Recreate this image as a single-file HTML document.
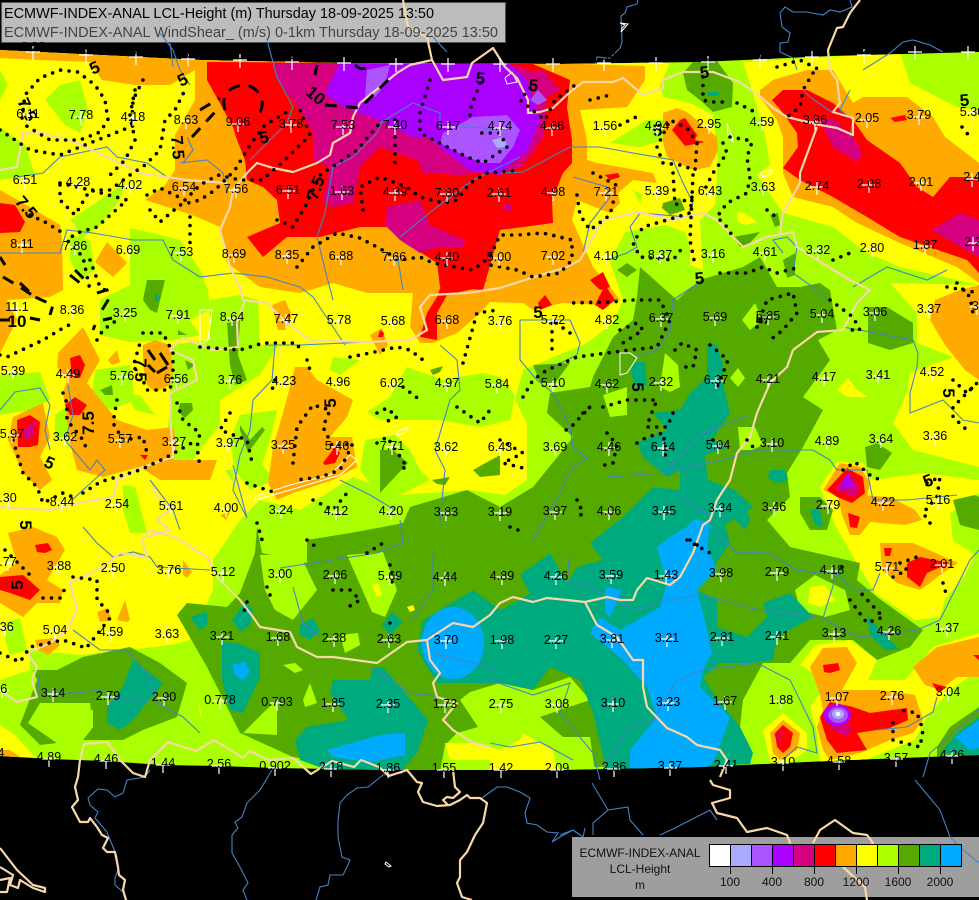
<!DOCTYPE html>
<html><head><meta charset="utf-8"><title>ECMWF-INDEX-ANAL</title>
<style>html,body{margin:0;padding:0;background:#000;overflow:hidden}svg{display:block}text{font-family:"Liberation Sans",sans-serif}</style></head>
<body>
<svg xmlns="http://www.w3.org/2000/svg" width="979" height="900" viewBox="0 0 979 900">
<defs><clipPath id="c"><path d="M0,50 200,60 340,63 560,64 700,62 830,56 979,52 V755 L850,760 700,767 557,770 388,770 331,769 275,768 219,766 162,765 106,761 49,759 0,756Z"/></clipPath></defs>
<rect width="979" height="900" fill="#000"/>
<rect x="1.5" y="2.5" width="504" height="40" fill="#bcbcbc" stroke="#555"/>
<rect x="572" y="837" width="407" height="60" fill="#9e9e9e"/>
<g clip-path="url(#c)">
<rect width="979" height="900" fill="#aaff00"/>
<g fill="#ffff00">
<path d="M0,50 670,63 660,85 663,97 690,103 713,115 718,160 715,205 700,220 703,270 690,265 690,245 685,232 665,225 625,232 610,262 623,300 613,323 587,343 523,370 515,400 527,423 527,480 505,495 470,490 400,495 353,477 300,510 260,500 240,520 213,560 213,590 190,640 170,645 130,650 80,655 30,650 30,670 0,680Z"/>
<path d="M743,62 900,53 910,83 957,107 979,110 979,285 900,267 867,253 833,227 783,213 757,175 770,165 765,135 755,100Z"/>
<path d="M890,283 979,285 979,467 913,450 893,423 907,393 910,373 953,357 917,343 917,313Z"/>
<path d="M820,487 837,462 863,463 873,480 923,473 979,480 979,493 950,513 953,540 975,555 965,575 945,600 940,617 915,620 875,593 855,560 835,525 825,500Z"/>
<path d="M0,725 15,735 35,757 0,757Z"/>
</g>
<g fill="#aaff00">
<path d="M45,100 60,85 80,80 88,110 80,133 65,125Z"/><path d="M0,70 8,85 0,100Z"/><path d="M0,127 25,145 35,175 0,180Z"/>
<path d="M70,220 125,183 120,200 100,225 80,240 75,225Z"/>
<path d="M130,228 160,235 180,240 200,270 208,290 210,310 190,320 200,335 175,340 130,342 100,335 100,300 130,285Z"/>
<path d="M70,235 90,240 95,270 80,280 70,260Z"/>
<path d="M170,345 210,340 210,300 240,295 258,300 260,345 278,345 260,375 220,400 220,425 200,450 190,465 172,460 168,425 170,400Z"/>
<path d="M240,415 277,410 270,440 262,465 275,480 250,490 235,470 230,440Z"/>
<path d="M0,375 40,372 50,400 30,410 0,415Z"/><path d="M95,370 130,365 135,400 110,410 92,395Z"/><path d="M127,395 140,395 155,415 135,410Z"/><path d="M55,415 75,400 72,440 55,440Z"/>
<path d="M610,143 647,120 667,120 663,140 640,147Z"/><path d="M633,190 643,195 640,203Z"/>
<path d="M123,485 135,487 147,533 130,533 123,510Z"/><path d="M97,450 110,450 113,462 100,462Z"/><path d="M225,470 233,470 233,482Z"/><path d="M333,357 360,360 340,375 330,370Z"/>
<path d="M367,412 390,397 407,367 443,380 483,373 500,377 515,395 510,420 480,427 440,420 415,420 380,420Z"/>
<path d="M365,440 395,435 410,450 420,470 430,480 400,495 375,490 360,470Z"/>
<path d="M7,622 20,618 27,650 10,655 5,640Z"/>
</g>
<g fill="#55aa00">
<path d="M640,267 677,300 700,280 743,267 760,257 777,287 800,287 820,283 830,290 837,330 818,340 830,360 803,397 823,410 803,447 787,473 790,497 767,520 790,547 860,563 857,580 877,597 923,630 910,647 877,660 853,640 810,640 790,663 763,663 743,700 740,727 753,762 440,772 387,772 293,757 240,733 207,667 177,615 187,603 227,607 240,593 255,553 257,527 262,553 307,563 307,540 350,533 383,527 403,523 410,507 467,490 500,507 533,487 563,450 573,437 547,413 550,393 590,387 593,377 613,337 633,320 637,297Z"/>
<path d="M37,680 33,670 57,670 83,657 130,647 160,663 187,683 177,717 143,730 123,740 83,740 93,727 93,710 43,707 28,723 57,743 40,745 20,725Z"/>
<path d="M868,307 887,307 913,323 913,343 890,350 868,343Z"/><path d="M865,447 877,443 892,453 880,470 867,467Z"/><path d="M800,497 820,497 833,510 827,530 810,530 800,513Z"/><path d="M953,500 975,495 979,497 979,530 960,525Z"/>
<path d="M683,73 693,62 717,61 733,83 732,107 713,112 700,100 687,90Z"/><path d="M663,203 680,198 685,210 670,215 662,208Z"/><path d="M727,227 733,237 760,232 750,243 740,247Z"/><path d="M770,215 778,213 780,225 775,227Z"/><path d="M783,260 795,253 795,275 787,278Z"/><path d="M617,270 627,263 637,270 627,277Z"/>
<path d="M227,323 240,320 238,355 247,380 235,385 230,365Z"/><path d="M180,403 192,403 193,410 185,418 178,412Z"/><path d="M100,390 112,385 113,395 105,395Z"/><path d="M178,330 187,335 178,335Z"/><path d="M185,360 195,365 188,370Z"/><path d="M240,425 250,440 262,427 265,430 250,450 247,450 240,430Z"/><path d="M380,450 393,450 408,463 380,493Z"/><path d="M473,470 500,455 500,475 480,477Z"/><path d="M432,480 450,477 445,485 437,484Z"/><path d="M430,370 443,366 440,372 433,375Z"/><path d="M147,280 165,280 157,313 150,310 143,300Z"/><path d="M533,365 570,363 555,383 540,383Z"/>
<path d="M703,663 743,667 743,680 723,690 703,687Z"/>
<path d="M937,747 950,727 979,707 979,757 937,757Z"/>
</g>
<g fill="#aaff00">
<path d="M738,427 755,427 763,445 752,450 740,450Z"/><path d="M742,320 755,303 762,320 750,330Z"/><path d="M730,378 738,368 745,378 738,387Z"/><path d="M660,387 665,353 678,365 680,387 670,392Z"/><path d="M603,395 627,387 627,415 610,417Z"/>
<path d="M347,555 383,552 397,590 385,617 372,612Z"/><path d="M340,635 358,633 360,645 345,653Z"/><path d="M283,665 295,663 303,670 295,673Z"/><path d="M303,700 310,683 317,703 305,707Z"/><path d="M243,733 263,713 277,700 277,735Z"/><path d="M40,703 90,703 93,727 83,740 57,743 28,723Z"/>
<path d="M260,555 300,555 317,590 293,620 275,610 265,590Z"/>
<path d="M440,772 445,745 457,733 478,727 460,700 470,692 500,683 533,690 570,677 590,700 560,710 540,717 563,737 590,737 595,772Z"/>
<path d="M795,590 815,575 845,590 850,610 825,617 800,610Z"/>
<path d="M753,700 767,690 790,693 803,713 817,737 810,760 750,762Z"/>
<path d="M800,665 815,645 850,640 877,660 868,680 905,680 933,647 979,633 979,700 950,690 925,740 860,762 820,762 808,710Z"/>
</g>
<g fill="#ffff00">
<path d="M490,755 520,740 523,733 553,750 557,772 490,772Z"/><path d="M737,212 745,213 757,222 745,225 737,222Z"/><path d="M837,390 848,378 857,390 868,397 847,397Z"/><path d="M372,585 378,583 382,595 377,597Z"/><path d="M407,607 413,605 415,610 410,612Z"/><path d="M198,700 200,715 202,716Z"/><path d="M810,587 825,585 835,600 820,607 808,603Z"/>
<path d="M763,730 783,713 807,733 807,750 790,762 770,762Z"/>
<path d="M800,665 815,645 850,640 877,660 868,680 905,680 933,647 979,633 979,670 950,690 925,720 915,740 860,762 820,762 817,733 810,707 827,683 820,677Z"/>
<path d="M445,743 480,743 500,750 490,760 450,760Z"/>
</g>
<g fill="#00aa7f">
<path d="M717,345 723,365 722,380 730,413 712,440 730,447 705,455 708,480 735,490 753,507 725,525 730,543 697,590 717,600 717,627 747,637 767,617 763,603 790,593 813,617 777,637 773,660 750,663 720,663 703,677 713,693 740,727 753,753 750,764 607,772 593,713 580,680 550,667 533,690 500,683 467,683 437,683 417,650 423,620 473,590 500,610 520,600 530,593 520,575 550,553 567,583 577,567 603,560 590,543 623,517 653,487 680,490 680,470 667,477 643,457 637,443 667,430 653,413 680,410 690,393 707,377 707,343Z"/>
<path d="M333,680 370,680 373,667 383,667 428,720 417,753 400,772 333,772 300,760 295,740 307,727 348,720 330,693Z"/>
<path d="M222,642 238,643 260,653 260,677 243,713 230,710 222,680Z"/><path d="M133,660 163,683 133,720 120,730 107,723 107,707 123,687Z"/>
<path d="M190,617 207,612 207,625 200,630Z"/><path d="M232,620 245,602 253,610 250,625 240,632Z"/><path d="M300,625 313,618 320,630 310,640 300,635Z"/><path d="M382,625 392,612 403,622 390,635Z"/>
<path d="M867,615 880,630 900,650 885,650 870,635Z"/><path d="M770,470 785,470 788,480 778,483 768,478Z"/><path d="M633,362 645,362 647,385 637,388 631,375Z"/><path d="M810,510 820,510 823,527 815,525Z"/><path d="M707,92 720,92 718,96 708,96Z"/>
<path d="M155,292 160,298 155,302Z"/><path d="M940,753 957,733 979,717 979,755Z"/>
<path d="M735,520 745,505 750,520 745,530Z"/>
</g>
<g fill="#00aaff">
<path d="M693,520 710,522 707,547 717,570 697,590 703,613 712,653 703,670 700,687 730,717 717,753 707,772 630,772 630,750 657,717 647,687 623,660 590,633 600,617 620,630 660,607 667,583 657,547 670,537 687,527Z"/>
<ellipse cx="453" cy="643" rx="31" ry="36"/>
<path d="M327,750 380,735 405,733 405,755 370,762 335,757Z"/><path d="M232,665 245,662 250,672 243,680 235,675Z"/><path d="M605,587 622,590 610,617 605,612Z"/><path d="M955,737 979,720 979,748 970,750Z"/>
</g>
<g fill="#ffaa00">
<path d="M0,50 580,64 645,66 645,80 627,107 580,110 587,140 587,160 597,163 653,173 657,183 633,180 618,193 620,203 610,213 577,200 572,220 593,267 610,287 620,300 600,305 563,303 533,310 523,303 490,302 480,313 457,333 433,343 420,343 410,327 413,293 367,293 333,283 300,293 260,287 227,263 220,227 197,217 177,210 145,200 165,185 175,170 175,135 195,100 195,70 170,85 135,85 102,80 90,62 40,60 0,58Z"/>
<path d="M663,113 677,108 687,112 717,137 718,150 710,167 693,170 667,157 663,143Z"/>
<path d="M760,90 773,80 807,70 833,70 853,103 863,97 907,97 933,117 945,137 979,163 979,283 957,267 933,257 900,243 857,223 833,207 793,197 783,173 783,137 777,120 760,97Z"/>
<path d="M0,190 30,207 60,225 62,240 63,290 50,297 7,300 17,320 0,353Z"/>
<path d="M95,262 107,242 127,263 113,277Z"/>
<path d="M58,353 83,327 100,360 87,383 117,420 147,430 173,427 177,447 173,460 217,460 210,480 160,480 140,467 103,477 77,470 70,443 63,393 67,380 57,367Z"/>
<path d="M13,417 43,403 50,437 40,457 52,480 40,490 23,473 8,440Z"/>
<path d="M143,345 155,340 170,345 173,370 170,385 155,392 147,385 143,365Z"/>
<path d="M295,367 307,367 317,380 353,400 347,417 330,437 352,437 357,467 333,480 293,493 277,500 268,483 273,447 283,413 290,387Z"/>
<path d="M272,305 285,300 292,315 285,330 278,330Z"/><path d="M370,335 382,328 388,345 380,355 375,345Z"/><path d="M108,360 117,350 120,362 112,365Z"/>
<path d="M8,533 33,527 57,537 65,550 47,580 63,590 60,603 37,603 23,617 0,603 0,575 17,563Z"/>
<path d="M35,640 55,638 60,645 48,655 38,650Z"/>
<path d="M97,612 108,608 112,620 100,622Z"/><path d="M117,620 125,600 130,620 127,622Z"/><path d="M183,560 192,572 187,578 183,575Z"/><path d="M0,750 10,750 20,757 0,757Z"/><path d="M220,515 230,512 226,520Z"/>
<path d="M838,497 860,495 890,497 915,510 922,520 905,525 870,522 860,535 850,535 842,515Z"/>
<path d="M823,490 840,463 860,467 870,483 867,497 845,500Z"/>
<path d="M880,543 913,543 958,563 940,575 930,583 920,590 897,583 882,570Z"/>
<path d="M810,667 823,648 847,647 857,663 842,690 880,690 915,695 923,720 913,733 890,740 860,753 830,760 823,750 817,727 823,710 820,695Z"/>
<path d="M913,667 937,647 979,637 979,677 957,677 940,690 925,685Z"/>
<path d="M770,733 783,720 800,733 797,750 780,760 773,753Z"/>
<path d="M960,290 979,285 979,380 965,370 945,345 930,320 935,300Z"/>
</g>
<g fill="#ff0000">
<path d="M207,62 533,64 570,80 567,107 572,140 572,163 563,173 552,200 553,223 500,230 483,290 440,287 437,263 417,250 393,227 360,227 320,237 287,237 263,257 247,237 280,223 277,200 263,187 247,180 245,160 237,140 233,127 207,80Z"/>
<path d="M443,280 487,280 477,288 447,295 437,313 437,340 420,337 427,313 437,297Z"/>
<path d="M772,100 783,90 807,90 833,103 853,120 867,140 900,163 917,187 933,197 950,177 979,177 979,273 967,260 900,237 867,217 833,197 800,180 783,168 798,147 797,133 783,113Z"/>
<path d="M890,118 905,115 907,120 895,122Z"/>
<path d="M0,203 15,205 25,222 20,232 0,233Z"/>
<path d="M70,358 80,355 85,365 80,378 72,377Z"/><path d="M65,405 75,397 87,405 80,415 70,415Z"/><path d="M140,455 148,455 145,460Z"/>
<path d="M17,420 30,415 40,422 38,445 30,447 18,447Z"/>
<path d="M323,463 335,447 340,453 335,463 325,465Z"/>
<path d="M0,577 23,575 40,590 30,600 10,593 0,590Z"/><path d="M35,545 48,543 52,550 45,553 37,552Z"/>
<path d="M680,120 685,118 697,135 695,140 705,142 685,146 672,130Z"/><path d="M605,175 618,173 620,177 610,180Z"/>
<path d="M590,280 603,272 610,287 600,290Z"/><path d="M595,305 605,285 615,300 603,310Z"/>
<path d="M538,303 545,295 552,305 540,310Z"/><path d="M380,330 384,333 383,337 378,337Z"/>
<path d="M848,513 860,517 857,528 850,527Z"/>
<path d="M827,490 847,468 863,477 865,493 852,503 837,497Z"/>
<path d="M907,563 920,557 950,563 927,573 920,587 907,577Z"/><path d="M884,548 892,548 890,556 885,556Z"/>
<path d="M823,665 838,663 840,670 830,673 824,672Z"/>
<path d="M820,717 830,702 853,707 870,713 907,708 908,720 890,728 857,733 867,750 837,753 827,740 823,727Z"/>
<path d="M932,683 947,687 938,693Z"/><path d="M973,655 979,655 979,660Z"/>
<path d="M775,733 783,725 793,733 790,747 783,753 777,747Z"/>
</g>
<g fill="#d4007f">
<path d="M273,63 517,65 533,72 543,70 560,90 547,97 543,137 533,153 520,168 500,172 460,175 423,173 417,160 380,147 360,167 353,203 333,207 323,200 330,167 313,160 313,133 293,100 277,80Z"/>
<path d="M387,207 420,200 430,225 465,240 463,248 440,247 420,253 400,240 385,225Z"/>
<path d="M820,120 833,118 853,137 862,153 858,162 833,147Z"/>
<path d="M932,230 960,213 979,220 979,257 960,247Z"/>
<path d="M503,205 510,203 512,210 503,211Z"/>
<path d="M23,430 35,420 33,437 25,440Z"/>
<path d="M835,490 848,472 860,487 855,497Z"/>
<path d="M837,723 853,727 847,737 830,728Z"/>
<path d="M773,735 784,727 781,748 776,738Z" opacity=".4"/>
</g>
<g fill="#aa00ff">
<path d="M340,63 510,64 527,80 540,120 528,150 513,163 500,175 470,170 443,150 430,138 413,137 380,120 360,113 340,105 325,93Z"/>
<path d="M840,488 848,473 853,488Z"/>
<ellipse cx="837" cy="715" rx="14" ry="11"/>
</g>
<g fill="#aa55ff">
<path d="M367,70 390,65 385,85 375,97 365,97Z"/>
<path d="M440,143 443,133 473,117 507,115 520,130 513,147 500,163 483,163 467,157 447,147Z"/>
<path d="M530,100 538,90 547,100 538,105Z"/>
<ellipse cx="838" cy="715" rx="10" ry="8"/>
</g>
<g fill="#aaaaff">
<path d="M492,140 503,137 508,147 497,148Z"/>
<ellipse cx="838" cy="714" rx="6" ry="5"/>
</g>
<ellipse cx="838" cy="714" rx="2.5" ry="2" fill="#fff"/>
</g>
<!-- rivers -->
<g fill="none" stroke="#4583c4" stroke-width="1.1">
<path d="M170,43 173,67M267,40 277,77 293,107 287,123 277,133 250,160M160,33 173,50 180,70 190,85M433,37 447,52"/>
<path d="M0,253 60,253 67,230 93,233 133,240 163,240 173,260 200,277 233,273 267,277 300,287 313,297 345,345"/>
<path d="M60,157 107,147 117,157 147,163 167,177M60,157 43,173 17,177M180,163 207,160 223,173 227,193M187,137 193,150 183,163"/>
<path d="M383,120 377,133 353,157 333,167 325,213 317,237 327,277 333,300M400,237 433,210 473,180 520,157M397,253 403,290M413,103 440,113 440,127 473,127 507,130M413,103 380,123"/>
<path d="M500,173 523,172 570,147 600,147 633,153 673,160 683,183 693,203 687,217 640,213 630,227 637,247 627,253 607,260M583,253 590,223 610,197 607,187 573,177"/>
<path d="M850,90 840,110 853,120 850,137M833,113 810,97 803,90M863,70 890,53 903,42 913,40 930,45 943,52M853,287 887,267 927,280 947,270M783,253 773,240 787,237 797,247 793,273 817,290 827,300"/>
<path d="M843,327 913,340 918,353 917,367 910,393 910,413 943,400 963,420 979,423M520,320 520,360 537,380 553,393 570,427 573,447 587,458 570,470 560,493 533,540M520,320 570,320 580,343 577,355 553,367M637,357 657,350 670,330 673,300 703,280"/>
<path d="M607,477 663,473 707,463 733,457 757,450 813,450 830,460 837,470 867,470 873,500 907,500 957,495M667,470 703,433 750,415M680,497 717,520"/>
<path d="M265,345 300,345 367,342M275,345 272,380 253,400 250,430 240,455 233,490 247,518M68,385 73,415 65,440 90,470 97,460 105,470 72,500M0,410 15,392 40,388 50,405 45,430 50,450M440,345 457,360 460,390 450,400 435,450 445,470 440,520M340,480 370,495 395,510M150,480 173,510 180,530M233,465 247,518"/>
<path d="M83,527 97,543 113,557 133,552 150,557 157,567 210,570M293,587 303,623 320,637M280,568 377,553 403,543 400,520M433,553 433,590 413,620M73,630 100,650 127,650 147,673 157,703 183,717 200,733M40,673 37,693 77,693 100,690 113,700 150,700M433,653 500,670M370,667 410,693 440,697"/>
<path d="M490,680 533,695 570,683 560,713 593,753 600,780M570,553 567,580 590,587 607,597 637,610 667,600 700,595 723,600 750,608 823,618 857,637 883,635 917,630 940,620 970,560 979,550M823,618 837,573 817,573 797,570 767,552 737,553 713,530M837,573 853,590 873,590 880,573M603,767 630,727 653,720 677,680 703,670 757,663 790,680 813,727 817,753 797,747 783,760M877,730 907,727 933,712 937,697M923,777 930,753 957,730 979,710M490,743 510,747 540,742 573,760"/>
<path d="M150,770 145,777 127,780 123,793 115,797 107,790 98,789 88,798 90,805 98,812 95,818 107,832 113,847 117,857 118,870 115,878 115,885 123,892 127,900"/>
<path d="M272,770 260,790 247,803 242,817 235,822 238,828 232,835 232,853 240,867 248,883 243,890 247,900"/>
<path d="M403,773 383,775 368,787 357,788 347,795 340,803 338,820 338,837 342,857 350,860 347,867 343,875 330,875 328,885 320,887 316,900"/>
<path d="M482,798 497,787 507,787 520,792 530,798 525,813 527,823 537,825 547,832 558,833 552,842 560,837 573,830 580,835"/>
<path d="M592,783 608,810 593,823 593,835M608,810 628,807 630,820 643,835M560,835 573,830 583,837 585,828M660,835 677,827 710,810 717,820M915,780 940,810 950,837 963,850 979,863"/>
<path d="M638,0 637,4 627,7 625,13 621,16 622,42 620,48 610,58 597,57 595,63M850,0 852,7 840,12 830,10 823,15 807,12 793,12 785,7 780,13 782,27 790,33 788,42 780,43 780,52 793,58 797,70"/>
</g>
<!-- lake outlines -->
<g fill="none" stroke="#fff" stroke-width="1">
<path d="M255,500 290,490 340,475 357,460 350,455 330,475 290,485 256,496ZM200,310 212,310 208,340 200,345ZM397,432 408,427 405,433 397,435ZM620,353 630,353 637,358 627,373 620,375ZM727,123 733,140 733,142 728,135ZM760,173 772,170 770,175 763,177ZM505,78 512,72 517,82 507,84ZM386,862 391,866 389,867 385,864ZM620,23 628,24 621,32 622,28 625,25Z"/>
</g>
<!-- borders -->
<g fill="none" stroke="#f8d8a8" stroke-width="2.2" stroke-linejoin="round">
<path d="M403,0 408,27 427,37 432,60 410,65 397,73 360,103 353,117 350,133 333,143 330,155 317,163 293,172 273,168 257,163 247,173 233,190 230,207 220,230 230,267 240,287 243,300 267,303 287,323 310,340 367,342 410,340 427,330 420,307 430,295 467,293 500,288 547,273 567,267 580,260 603,220 637,212 673,220 703,213 717,220 743,247 767,237 793,232 797,247 817,260 850,280 870,290 857,303 843,330 817,332 793,350 787,367 770,383 757,413 750,437 737,453 730,480 717,500 710,520 703,525 693,553 680,577 670,585 647,578 637,590 633,600 620,600 607,597 585,602 567,600 547,598 533,602 513,597 500,603 490,615 473,627 453,623 427,640 407,642 377,663 333,657 317,657 297,647 290,632 260,627 253,617 240,600 217,577 208,558 177,538 150,530 142,540 147,557 120,553 103,567 70,583 77,610 67,630 50,643 27,653 37,667 32,680 37,697 17,702 0,690"/>
<path d="M0,507 50,510 83,502 113,497 117,480 143,467 173,457 170,413 170,393 197,380 193,360 170,350 183,338 213,350 238,347 237,323 245,300"/>
<path d="M153,487 157,497 170,510 157,520 170,530 147,537"/>
<path d="M0,170 17,167 23,133 43,133 77,143 113,160 140,173 187,180 227,183"/>
<path d="M585,602 597,625 617,637 633,660 643,660 643,687 647,707 667,728 687,737 697,745 720,750 727,760 720,777"/>
<path d="M710,780 713,785 730,790 730,798 712,803 717,813 737,818 747,832 767,828 787,835 790,843 793,860M813,843 820,830 835,820 853,833 867,835 873,843 843,867 865,887 867,900"/>
<path d="M84,744 107,742 121,761 133,773 145,777 150,760 168,742 196,751 214,740 243,758 250,751 268,760 293,758 311,774 332,761 354,767 361,760 379,767 389,776 407,770 417,782 422,783 418,792 423,802 437,806 450,805 460,800 467,795 470,798 480,798 487,803 483,823 475,835 467,852 460,860 460,877 457,883 462,897 472,900"/>
<path d="M84,744 80,760 78,777 75,787 78,800 72,807 80,822 88,822 90,818 97,827 102,835 108,838 103,848 107,852 115,852 118,867 119,875 125,880 123,890 126,900"/>
<path d="M453,770 455,787 460,792 453,798 447,797 443,800 448,805"/>
<path d="M427,640 430,660 440,673 433,683 437,697 457,703 443,720 453,730 473,743 490,747"/>
<path d="M0,848 17,870 33,885 45,888 45,892 33,888 20,880 18,888 10,885 13,875 0,867M0,880 10,878 7,892 0,892"/>
<path d="M860,0 850,13 843,27 837,28 828,50 830,70 837,80 840,103 833,112 853,118 853,135 837,128 820,125 787,117 773,108 762,98 740,82 713,72 683,72 663,80 663,88 643,95 623,78 613,82 583,82 570,92 553,108 540,112 528,113 528,100 517,78 505,67 493,48 472,63 467,77 443,80 432,60"/>
<path d="M817,127 800,173 800,183 783,213 780,233"/>
</g>
<!-- dotted contours -->
<g fill="none" stroke="#000" stroke-width="3.6" stroke-linecap="round" stroke-dasharray="0 8.5">
<path d="M22,118 25,95 40,78 60,70 78,72 95,85 105,100 108,120 100,132 80,140 50,140 25,125"/>
<path d="M0,130 30,150 60,155 85,145 110,135 135,125"/>
<path d="M60,185 60,200 75,215 90,190 110,190 130,175 145,165 160,150 165,120 175,110 185,90"/>
<path d="M147,195 160,188 185,200 200,185 218,175 240,180 262,180 285,160 310,135 300,110"/>
<path d="M135,90 130,115 135,140 125,160 110,175M150,210 160,222 180,205 200,200 215,190 235,170 250,145 265,125 290,110"/>
<path d="M363,210 360,187 380,177 407,187 420,197 443,203 457,200 470,183 487,173 520,170"/>
<path d="M277,220 293,227 305,207 320,175 357,150 380,123M395,120 395,165"/>
<path d="M430,80 420,113 420,133 467,157 483,163 507,147 500,133 480,133M480,83 470,110 470,123"/>
<path d="M297,267 313,247 337,233 360,238 377,247 400,260 420,257 433,263 473,270 490,257 500,235 517,235 543,233 572,240 572,260 560,273 533,277 517,270 490,265"/>
<path d="M577,195 580,215 590,230 610,215 615,195M593,173 620,187M657,147 663,163 680,165 695,170 697,143 687,128 670,120 657,147"/>
<path d="M673,173 675,205 692,197 690,213 667,220 643,227 633,243 640,257 673,260 683,247M723,143 727,153 713,173 703,193M730,137 747,140 752,142 747,157 750,177 747,193 727,203 717,217 727,227 733,237M693,175 690,240 695,265"/>
<path d="M777,67 800,60 820,70M813,73 803,90 800,107 783,120M737,103 757,113M703,77 703,100 710,102 730,102M833,260 850,253M767,210 780,220M720,273 747,273 763,267 777,273 800,267"/>
<path d="M757,327 767,300 793,293 797,313 783,330 770,340M675,350 682,343 697,350 693,367 680,367M710,345 728,360 723,373 717,387M830,300 853,317 860,330 847,330"/>
<path d="M523,397 533,380 547,370 577,357 607,353 630,350 657,347 670,320 660,300 633,300 610,302 570,303M620,330 637,323 643,330 623,343M570,333 552,320 552,353M583,413 590,407 570,428 560,433"/>
<path d="M603,407 627,400 657,400 650,417 647,427 667,427 673,413M637,443 647,437 663,433 667,453 663,458M607,433 617,445 613,463 597,467M713,440 723,450M747,440 753,447"/>
<path d="M0,355 7,357 43,340 63,328 73,323M97,340 103,330 117,320M143,333 163,333 173,353 173,373 170,390 147,390 140,373 133,367 140,343"/>
<path d="M117,400 113,423 123,440 143,437 147,453M63,393 67,403 67,420 83,440 87,450M13,440 23,473 37,487 43,503 63,493 73,497M83,493 100,482 113,478 140,470 167,457 197,440M177,403 183,420 200,433 197,447 200,467"/>
<path d="M200,347 240,350 263,343 297,343 300,350M275,380 272,390M230,413 220,430 247,440 253,467M293,463 297,427 313,405 330,410 323,427 333,447 353,443 340,470 320,477 297,480M247,483 267,490 277,493"/>
<path d="M307,360 310,370M350,357 370,353 397,347 410,350 427,363M463,363 477,313 497,310M457,407 480,423 490,410M377,413 387,408 397,417 383,423M403,387 420,400M377,443 387,437 407,467 397,470M313,500 333,510 347,493M500,440 523,453 503,463 523,468"/>
<path d="M257,523 263,543M307,540 320,550M333,590 350,590 360,600 343,610M367,553 380,545 387,540M247,602 242,618M267,587 270,595M390,623 395,625M390,565 392,582"/>
<path d="M73,577 97,580 97,600 107,610 110,618 87,647M43,598 60,598 68,583M0,653 20,662 30,647 63,640 83,647M5,550 17,562 30,575"/>
<path d="M687,540 710,553M690,540 700,547M850,600 867,623 883,617 860,592M893,577 907,570 900,563 917,557M943,583 947,597M893,723 893,740 920,747 923,730 917,713 900,710M842,567 845,567"/>
<path d="M927,483 940,477 937,497 923,513 930,523M953,380 967,393 977,383 953,407 953,417 970,433M947,287 979,293M957,283 970,297 973,313M962,127 970,137M577,500 583,513 577,518M510,527 523,532"/>
<path d="M143,80 133,100 132,123M60,183 90,190 127,200 97,227 77,233 67,240 83,257 90,290M30,215 45,222 63,233M190,217 190,243M90,260 100,287 110,293"/>
<path d="M843,470 855,462 870,475 880,480M530,88 520,100 545,120 555,100 575,85M590,100 610,95M620,125 640,115"/>
</g>
<!-- dashed contours -->
<g fill="none" stroke="#000" stroke-width="3" stroke-dasharray="12 9">
<path d="M200,110 220,98M192,137 215,112M225,110C220,95 230,85 247,85 262,90 268,105 255,120"/>
<path d="M317,65 315,75M325,105 360,108 393,75M355,65C360,70 365,70 370,65"/>
<path d="M20,283 35,297 53,305 50,315M0,320 10,320M30,318 40,320M0,257 5,265M3,277 20,287 35,297"/>
<path d="M97,293 107,290 110,297 102,310M103,320 112,318M95,325 93,330M70,275 80,283M75,270 85,280"/>
<path d="M148,350 155,360M160,353 168,365M148,365 155,372M157,373 167,367" stroke-dasharray="none"/>
</g>
<!-- contour labels -->
<g font-weight="bold" font-size="17" text-anchor="middle" fill="#000">
<text transform="translate(97,73) rotate(-25)">5</text><text transform="translate(185,85) rotate(-25)">5</text><text transform="translate(22,112) rotate(65)">7.5</text><text transform="translate(22,211) rotate(50)">7.5</text><text transform="translate(172,148) rotate(85)">7.5</text><text transform="translate(265,143) rotate(-10)">5</text><text transform="translate(312,100) rotate(40)">10</text><text transform="translate(321,190) rotate(-70)">7.5</text><text transform="translate(480,84) rotate(5)">5</text><text transform="translate(533,91) rotate(5)">5</text><text transform="translate(705,78) rotate(-5)">5</text><text transform="translate(658,136) rotate(-5)">5</text><text transform="translate(965,106) rotate(-5)">5</text><text transform="translate(700,284) rotate(-5)">5</text><text transform="translate(538,318)">5</text><text transform="translate(632,387) rotate(90)">5</text><text transform="translate(768,320) rotate(-85)">5</text><text transform="translate(943,393) rotate(90)">5</text><text transform="translate(930,486) rotate(-20)">5</text><text transform="translate(135,370) rotate(90)">7.5</text><text transform="translate(94,423) rotate(-90)">7.5</text><text transform="translate(47,468) rotate(25)">5</text><text transform="translate(336,403) rotate(-90)">5</text><text transform="translate(20,525) rotate(90)">5</text><text x="17" y="327">10</text><text transform="translate(23,585) rotate(-90)">5</text>
</g>
<!-- crosses -->
<path fill="none" stroke="#fff" stroke-width="1.2" d="M26,52h14M33,46v14M79,55h14M86,49v14M129,57h14M136,51v14M181,59h14M188,53v14M233,60h14M240,54v14M285,62h14M292,56v14M337,63h14M344,57v14M389,64h14M396,58v14M441,64h14M448,58v14M493,64h14M500,58v14M546,64h14M553,58v14M597,63h14M604,57v14M649,63h14M656,57v14M701,62h14M708,56v14M753,60h14M760,54v14M805,57h14M812,51v14M857,55h14M864,49v14M908,52h14M915,46v14M961,52h14M968,46v14
M21,115h14M28,109v14M74,117h14M81,111v14M126,118h14M133,112v14M179,121h14M186,115v14M231,124h14M238,118v14M284,125h14M291,119v14M336,127h14M343,121v14M388,127h14M395,121v14M441,127h14M448,121v14M493,128h14M500,122v14M545,128h14M552,122v14M598,128h14M605,122v14M650,128h14M657,122v14M702,126h14M709,120v14M755,123h14M762,117v14M808,122h14M815,116v14M860,120h14M867,114v14M912,117h14M919,111v14M965,113h14M972,107v14
M18,181h14M25,175v14M71,184h14M78,178v14M123,186h14M130,180v14M177,188h14M184,182v14M229,190h14M236,184v14M281,191h14M288,185v14M335,192h14M342,186v14M388,193h14M395,187v14M440,194h14M447,188v14M492,194h14M499,188v14M546,193h14M553,187v14M599,193h14M606,187v14M650,192h14M657,186v14M703,192h14M710,186v14M756,188h14M763,182v14M810,187h14M817,181v14M862,185h14M869,179v14M914,183h14M921,177v14M965,179h14M972,173v14
M15,245h14M22,239v14M68,247h14M75,241v14M121,251h14M128,245v14M174,253h14M181,247v14M227,255h14M234,249v14M280,256h14M287,250v14M334,257h14M341,251v14M387,258h14M394,252v14M440,258h14M447,252v14M492,258h14M499,252v14M546,257h14M553,251v14M599,257h14M606,251v14M653,256h14M660,250v14M706,255h14M713,249v14M758,253h14M765,247v14M811,251h14M818,245v14M865,249h14M872,243v14M918,246h14M925,240v14M966,243h14M973,237v14
M10,308h14M17,302v14M65,311h14M72,305v14M118,314h14M125,308v14M171,316h14M178,310v14M225,318h14M232,312v14M279,320h14M286,314v14M332,321h14M339,315v14M386,322h14M393,316v14M440,321h14M447,315v14M493,322h14M500,316v14M546,321h14M553,315v14M600,321h14M607,315v14M654,319h14M661,313v14M708,318h14M715,312v14M761,317h14M768,311v14M815,315h14M822,309v14M868,313h14M875,307v14M922,310h14M929,304v14M970,307h14M977,301v14
M6,372h14M13,366v14M61,375h14M68,369v14M115,377h14M122,371v14M169,380h14M176,374v14M223,381h14M230,375v14M277,382h14M284,376v14M331,383h14M338,377v14M385,384h14M392,378v14M440,384h14M447,378v14M490,385h14M497,379v14M546,384h14M553,378v14M600,385h14M607,379v14M654,383h14M661,377v14M709,381h14M716,375v14M761,380h14M768,374v14M817,378h14M824,372v14M871,376h14M878,370v14M925,373h14M932,367v14
M5,435h14M12,429v14M58,438h14M65,432v14M113,440h14M120,434v14M167,443h14M174,437v14M221,444h14M228,438v14M276,446h14M283,440v14M330,447h14M337,441v14M385,447h14M392,441v14M439,448h14M446,442v14M493,448h14M500,442v14M548,448h14M555,442v14M602,448h14M609,442v14M656,448h14M663,442v14M711,446h14M718,440v14M765,444h14M772,438v14M820,442h14M827,436v14M874,440h14M881,434v14M928,437h14M935,431v14
M1,499h14M8,493v14M55,503h14M62,497v14M110,505h14M117,499v14M164,507h14M171,501v14M219,509h14M226,503v14M274,511h14M281,505v14M329,512h14M336,506v14M384,512h14M391,506v14M439,513h14M446,507v14M493,513h14M500,507v14M548,512h14M555,506v14M602,512h14M609,506v14M657,512h14M664,506v14M713,509h14M720,503v14M767,508h14M774,502v14M821,506h14M828,500v14M876,503h14M883,497v14M931,501h14M938,495v14
M1,563h14M8,557v14M52,567h14M59,561v14M106,569h14M113,563v14M162,571h14M169,565v14M216,573h14M223,567v14M273,575h14M280,569v14M328,576h14M335,570v14M383,577h14M390,571v14M438,578h14M445,572v14M495,577h14M502,571v14M549,577h14M556,571v14M604,576h14M611,570v14M659,576h14M666,570v14M714,574h14M721,568v14M770,573h14M777,567v14M825,571h14M832,565v14M880,568h14M887,562v14M935,565h14M942,559v14
M-2,628h14M5,622v14M48,631h14M55,625v14M104,633h14M111,627v14M160,635h14M167,629v14M215,637h14M222,631v14M271,638h14M278,632v14M327,639h14M334,633v14M382,640h14M389,634v14M439,641h14M446,635v14M495,641h14M502,635v14M549,641h14M556,635v14M605,640h14M612,634v14M660,639h14M667,633v14M715,638h14M722,632v14M770,637h14M777,631v14M827,634h14M834,628v14M882,632h14M889,626v14M940,629h14M947,623v14
M-5,690h14M2,684v14M46,694h14M53,688v14M101,697h14M108,691v14M157,698h14M164,692v14M213,701h14M220,695v14M270,703h14M277,697v14M326,704h14M333,698v14M381,705h14M388,699v14M438,705h14M445,699v14M494,705h14M501,699v14M550,705h14M557,699v14M606,704h14M613,698v14M661,703h14M668,697v14M718,702h14M725,696v14M774,701h14M781,695v14M830,698h14M837,692v14M885,697h14M892,691v14M941,693h14M948,687v14
M42,759h14M49,753v14M99,761h14M106,755v14M156,765h14M163,759v14M212,766h14M219,760v14M268,768h14M275,762v14M324,769h14M331,763v14M381,770h14M388,764v14M437,770h14M444,764v14M494,770h14M501,764v14M550,770h14M557,764v14M607,769h14M614,763v14M663,768h14M670,762v14M719,766h14M726,760v14M776,763h14M783,757v14M832,762h14M839,756v14M889,759h14M896,753v14M945,756h14M952,750v14"/>
<!-- value labels -->
<g font-size="12.6" fill="#000" text-anchor="middle" transform="translate(0,-1)">
<text x="33" y="52">6.22</text><text x="86" y="55">6.55</text><text x="136" y="57">2.41</text><text x="188" y="59">5.89</text><text x="240" y="60">9.16</text><text x="292" y="62">5.43</text><text x="604" y="63">1.45</text><text x="656" y="63">3.13</text><text x="708" y="62">5.39</text><text x="760" y="60">3.68</text><text x="864" y="55">3.25</text>
<text x="28" y="119">6.11</text><text x="81" y="120">7.78</text><text x="133" y="122">4.18</text><text x="186" y="125">8.63</text><text x="238" y="127">9.06</text><text x="291" y="129">3.78</text><text x="343" y="130">7.53</text><text x="395" y="130">7.40</text><text x="448" y="131">6.17</text><text x="500" y="131">4.74</text><text x="552" y="131">4.66</text><text x="605" y="131">1.56</text><text x="657" y="131">4.94</text><text x="709" y="129">2.95</text><text x="762" y="127">4.59</text><text x="815" y="125">3.86</text><text x="867" y="123">2.05</text><text x="919" y="120">3.79</text><text x="972" y="117">5.30</text>
<text x="25" y="185">6.51</text><text x="78" y="187">4.28</text><text x="130" y="190">4.02</text><text x="184" y="192">6.54</text><text x="236" y="194">7.56</text><text x="288" y="195">6.51</text><text x="342" y="196">1.63</text><text x="395" y="197">4.39</text><text x="447" y="198">7.80</text><text x="499" y="198">2.61</text><text x="553" y="197">4.98</text><text x="606" y="197">7.21</text><text x="657" y="196">5.39</text><text x="710" y="196">6.43</text><text x="763" y="192">3.63</text><text x="817" y="191">2.74</text><text x="869" y="189">2.08</text><text x="921" y="187">2.01</text><text x="972" y="182">2.4</text>
<text x="22" y="249">8.11</text><text x="75" y="251">7.86</text><text x="128" y="255">6.69</text><text x="181" y="257">7.53</text><text x="234" y="259">8.69</text><text x="287" y="260">8.35</text><text x="341" y="261">6.88</text><text x="394" y="262">7.66</text><text x="447" y="262">4.40</text><text x="499" y="262">5.00</text><text x="553" y="261">7.02</text><text x="606" y="261">4.10</text><text x="660" y="260">8.37</text><text x="713" y="259">3.16</text><text x="765" y="257">4.61</text><text x="818" y="255">3.32</text><text x="872" y="253">2.80</text><text x="925" y="250">1.87</text><text x="973" y="247">2.2</text>
<text x="17" y="312">11.1</text><text x="72" y="315">8.36</text><text x="125" y="318">3.25</text><text x="178" y="320">7.91</text><text x="232" y="322">8.64</text><text x="286" y="324">7.47</text><text x="339" y="325">5.78</text><text x="393" y="326">5.68</text><text x="447" y="325">6.68</text><text x="500" y="326">3.76</text><text x="553" y="325">5.72</text><text x="607" y="325">4.82</text><text x="661" y="323">6.37</text><text x="715" y="322">5.69</text><text x="768" y="321">5.85</text><text x="822" y="319">5.04</text><text x="875" y="317">3.06</text><text x="929" y="314">3.37</text><text x="977" y="311">3.</text>
<text x="13" y="376">5.39</text><text x="68" y="379">4.49</text><text x="122" y="381">5.76</text><text x="176" y="384">6.56</text><text x="230" y="385">3.76</text><text x="284" y="386">4.23</text><text x="338" y="387">4.96</text><text x="392" y="388">6.02</text><text x="447" y="388">4.97</text><text x="497" y="389">5.84</text><text x="553" y="388">5.10</text><text x="607" y="389">4.62</text><text x="661" y="387">2.32</text><text x="716" y="385">6.37</text><text x="768" y="384">4.21</text><text x="824" y="382">4.17</text><text x="878" y="380">3.41</text><text x="932" y="377">4.52</text>
<text x="12" y="439">5.97</text><text x="65" y="442">3.62</text><text x="120" y="444">5.57</text><text x="174" y="447">3.27</text><text x="228" y="448">3.97</text><text x="283" y="450">3.25</text><text x="337" y="451">5.46</text><text x="392" y="451">7.71</text><text x="446" y="452">3.62</text><text x="500" y="452">6.43</text><text x="555" y="452">3.69</text><text x="609" y="452">4.46</text><text x="663" y="452">6.14</text><text x="718" y="450">5.04</text><text x="772" y="448">3.10</text><text x="827" y="446">4.89</text><text x="881" y="444">3.64</text><text x="935" y="441">3.36</text>
<text x="8" y="503">.30</text><text x="62" y="507">8.44</text><text x="117" y="509">2.54</text><text x="171" y="511">5.61</text><text x="226" y="513">4.00</text><text x="281" y="515">3.24</text><text x="336" y="516">4.12</text><text x="391" y="516">4.20</text><text x="446" y="517">3.83</text><text x="500" y="517">3.19</text><text x="555" y="516">3.97</text><text x="609" y="516">4.06</text><text x="664" y="516">3.45</text><text x="720" y="513">3.34</text><text x="774" y="512">3.46</text><text x="828" y="510">2.79</text><text x="883" y="507">4.22</text><text x="938" y="505">5.16</text>
<text x="8" y="567">.77</text><text x="59" y="571">3.88</text><text x="113" y="573">2.50</text><text x="169" y="575">3.76</text><text x="223" y="577">5.12</text><text x="280" y="579">3.00</text><text x="335" y="580">2.06</text><text x="390" y="581">5.69</text><text x="445" y="582">4.44</text><text x="502" y="581">4.89</text><text x="556" y="581">4.26</text><text x="611" y="580">3.59</text><text x="666" y="580">1.43</text><text x="721" y="578">3.98</text><text x="777" y="577">2.79</text><text x="832" y="575">4.18</text><text x="887" y="572">5.71</text><text x="942" y="569">2.01</text>
<text x="5" y="632">.36</text><text x="55" y="635">5.04</text><text x="111" y="637">4.59</text><text x="167" y="639">3.63</text><text x="222" y="641">3.21</text><text x="278" y="642">1.68</text><text x="334" y="643">2.38</text><text x="389" y="644">2.63</text><text x="446" y="645">3.70</text><text x="502" y="645">1.98</text><text x="556" y="645">2.27</text><text x="612" y="644">3.81</text><text x="667" y="643">3.21</text><text x="722" y="642">2.81</text><text x="777" y="641">2.41</text><text x="834" y="638">3.13</text><text x="889" y="636">4.26</text><text x="947" y="633">1.37</text>
<text x="2" y="694">.6</text><text x="53" y="698">3.14</text><text x="108" y="701">2.79</text><text x="164" y="702">2.90</text><text x="220" y="705">0.778</text><text x="277" y="707">0.793</text><text x="333" y="708">1.85</text><text x="388" y="709">2.35</text><text x="445" y="709">1.73</text><text x="501" y="709">2.75</text><text x="557" y="709">3.08</text><text x="613" y="708">3.10</text><text x="668" y="707">3.23</text><text x="725" y="706">1.67</text><text x="781" y="705">1.88</text><text x="837" y="702">1.07</text><text x="892" y="701">2.76</text><text x="948" y="697">3.04</text>
<text x="1" y="758">4</text><text x="49" y="762">4.89</text><text x="106" y="764">4.46</text><text x="163" y="768">1.44</text><text x="219" y="769">2.56</text><text x="275" y="771">0.902</text><text x="331" y="772">2.18</text><text x="388" y="773">1.86</text><text x="444" y="773">1.55</text><text x="501" y="773">1.42</text><text x="557" y="773">2.09</text><text x="614" y="772">2.86</text><text x="670" y="771">3.37</text><text x="726" y="770">2.41</text><text x="783" y="767">3.10</text><text x="839" y="766">4.58</text><text x="896" y="763">3.57</text><text x="952" y="760">4.26</text>
</g>
<!-- header text -->
<text x="4" y="18" font-size="14.4" fill="#000" textLength="430" lengthAdjust="spacingAndGlyphs">ECMWF-INDEX-ANAL LCL-Height (m) Thursday 18-09-2025 13:50</text>
<text x="4" y="37" font-size="14.4" fill="#444" textLength="494" lengthAdjust="spacingAndGlyphs">ECMWF-INDEX-ANAL WindShear_ (m/s) 0-1km Thursday 18-09-2025 13:50</text>
<!-- legend -->
<g stroke="#000" stroke-width="1">
<rect x="709.5" y="844.5" width="21" height="22" fill="#fff"/><rect x="730.5" y="844.5" width="21" height="22" fill="#aaaaff"/><rect x="751.5" y="844.5" width="21" height="22" fill="#aa55ff"/><rect x="772.5" y="844.5" width="21" height="22" fill="#aa00ff"/><rect x="793.5" y="844.5" width="21" height="22" fill="#d4007f"/><rect x="814.5" y="844.5" width="21" height="22" fill="#ff0000"/><rect x="835.5" y="844.5" width="21" height="22" fill="#ffaa00"/><rect x="856.5" y="844.5" width="21" height="22" fill="#ffff00"/><rect x="877.5" y="844.5" width="21" height="22" fill="#aaff00"/><rect x="898.5" y="844.5" width="21" height="22" fill="#55aa00"/><rect x="919.5" y="844.5" width="21" height="22" fill="#00aa7f"/><rect x="940.5" y="844.5" width="21" height="22" fill="#00aaff"/>
<path d="M730.5,867v7M772.5,867v7M814.5,867v7M856.5,867v7M898.5,867v7M940.5,867v7"/>
</g>
<g font-size="12" fill="#111" text-anchor="middle">
<text x="640" y="857" textLength="121" lengthAdjust="spacingAndGlyphs">ECMWF-INDEX-ANAL</text><text x="640" y="873">LCL-Height</text><text x="640" y="889">m</text>
<text x="730" y="886">100</text><text x="772" y="886">400</text><text x="814" y="886">800</text><text x="856" y="886">1200</text><text x="898" y="886">1600</text><text x="940" y="886">2000</text>
</g>
</svg>
</body></html>
